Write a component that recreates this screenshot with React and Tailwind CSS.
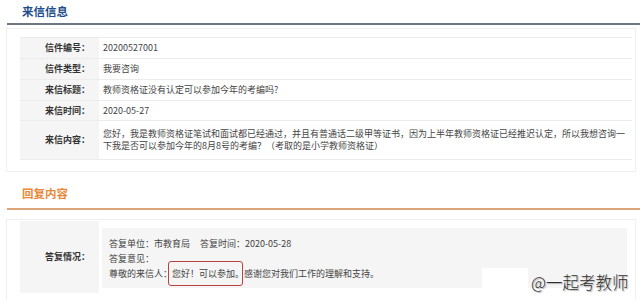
export default function App() {
  const rows = [
    ["信件编号：", "20200527001"],
    ["信件类型：", "我要咨询"],
    ["来信标题：", "教师资格证没有认定可以参加今年的考编吗?"],
    ["来信时间：", "2020-05-27"],
  ];
  const heights = ["h-[21px]", "h-[21px]", "h-[21px]", "h-[20px]"];
  return (
    <div className="relative w-[640px] h-[300px] overflow-hidden bg-white font-['Noto_Sans_CJK_SC',sans-serif] text-[9px] text-[#444]">
      {/* Section 1 header */}
      <div className="flex h-[23px] items-center pl-[22px] text-[11.5px] font-bold text-[#1f4e8c]">
        来信信息
      </div>
      <div className="ml-[7px] h-[2px] bg-[#6e7882]" />

      {/* Container 1 */}
      <div className="ml-[6px] mt-[3px] w-[630px] border border-[#f0f0f0] pl-[13px] pt-[8px] pb-[11px]">
        <div className="w-[612px] border-t border-[#ececec]">
          {rows.map(([k, v], i) => (
            <div key={k} className={`flex border-b border-[#ececec] ${heights[i]}`}>
              <div className="flex w-[79px] shrink-0 items-center justify-end bg-[#f5f5f5] pr-[9px] font-bold text-[#333]">
                {k}
              </div>
              <div className="flex flex-1 items-center pl-[4px]">{v}</div>
            </div>
          ))}
          <div className="flex h-[39px] border-b border-[#ececec]">
            <div className="flex w-[79px] shrink-0 items-center justify-end bg-[#f5f5f5] pr-[9px] font-bold text-[#333]">
              来信内容：
            </div>
            <div className="flex flex-1 items-center pl-[4px] leading-[12.5px] whitespace-nowrap">
              <div>
                您好，我是教师资格证笔试和面试都已经通过，并且有普通话二级甲等证书，因为上半年教师资格证已经推迟认定，所以我想咨询一
                <br />
                下我是否可以参加今年的8月8号的考编？（考取的是小学教师资格证）
              </div>
            </div>
          </div>
        </div>
      </div>

      {/* Section 2 header */}
      <div className="flex h-[36px] items-center pl-[22px] pt-[8px] text-[11.5px] font-bold text-[#e8893a]">
        回复内容
      </div>
      <div className="ml-[7px] h-[2px] bg-[#dda577]" />

      {/* Container 2 */}
      <div className="ml-[6px] mt-[9px] w-[630px] border border-[#f0f0f0] pl-[13px] pt-[1px] pb-[11px]">
        <div className="flex w-[612px]">
          <div className="flex h-[72px] w-[79px] shrink-0 items-center justify-end bg-[#f5f5f5] pr-[9px] font-bold text-[#333]">
            答复情况：
          </div>
          <div className="flex-1 pl-[3px] pr-[5px] pt-[7px] pb-[5px]">
            <div className="h-[60px] bg-[#f5f5f5] pl-[7px] pt-[8px] leading-[15px] whitespace-nowrap">
              <div>
                答复单位：市教育局<span className="ml-[10px]">答复时间：2020-05-28</span>
              </div>
              <div>答复意见：</div>
              <div>
                尊敬的来信人：
                <span className="relative">
                  您好！可以参加。
                  <span className="absolute left-[-4px] right-[1px] top-[-6px] bottom-[-6px] rounded-[3px] border-[1.5px] border-[#b8423c]" />
                </span>
                感谢您对我们工作的理解和支持。
              </div>
            </div>
          </div>
        </div>
      </div>

      {/* privacy cover */}
      <div className="absolute left-[482px] top-[268px] h-[22px] w-[46px] bg-white" />
      {/* watermark */}
      <div className="absolute left-[531px] top-[271px] text-[16.5px] font-light leading-[22px] text-[#2e2e2e] [text-shadow:0_0_2px_#fff,1px_1px_1px_#999]">
        @一起考教师
      </div>
    </div>
  );
}
